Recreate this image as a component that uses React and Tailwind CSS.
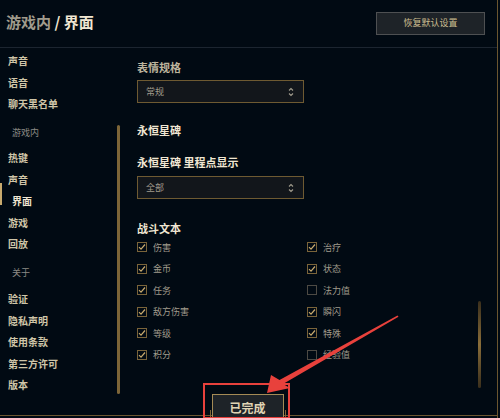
const LEFT_OPTS = [
  { label: '伤害', on: true },
  { label: '金币', on: true },
  { label: '任务', on: true },
  { label: '敌方伤害', on: true },
  { label: '等级', on: true },
  { label: '积分', on: true },
];

const RIGHT_OPTS = [
  { label: '治疗', on: true },
  { label: '状态', on: true },
  { label: '法力值', on: false },
  { label: '瞬闪', on: true },
  { label: '特殊', on: true },
  { label: '经验值', on: false },
];

const NAV = [
  { items: ['声音', '语音', '聊天黑名单'] },
  { title: '游戏内', items: ['热键', '声音', '界面', '游戏', '回放'] },
  { title: '关于', items: ['验证', '隐私声明', '使用条款', '第三方许可', '版本'] },
];

function UpDown() {
  return (
    <svg width="6" height="10" viewBox="0 0 6 10" fill="none" stroke="#a09b8c" strokeWidth="1.1">
      <path d="M1 3.5 L3 1.5 L5 3.5" />
      <path d="M1 6.5 L3 8.5 L5 6.5" />
    </svg>
  );
}

function Select({ value }) {
  return (
    <div className="flex h-[23px] w-[167px] items-center justify-between border border-[#6e5a32] bg-[#12161b] pl-[8px] pr-[9px]">
      <span className="text-[9px] text-[#a09b8c]">{value}</span>
      <UpDown />
    </div>
  );
}

function Check({ label, on }) {
  return (
    <div className="flex h-[21.5px] items-center gap-[6px]">
      <span className={`flex h-[10px] w-[10px] items-center justify-center border ${on ? 'border-[#7a643a]' : 'border-[#4d4a44]'}`}>
        {on && (
          <svg width="8" height="8" viewBox="0 0 8 8" fill="none" stroke="#c8aa6e" strokeWidth="1.2">
            <path d="M1 4.2 L3 6.2 L7 1.5" />
          </svg>
        )}
      </span>
      <span className="text-[9px] text-[#a09b8c]">{label}</span>
    </div>
  );
}

export default function App() {
  return (
    <div className="relative h-[418px] w-[500px] overflow-hidden bg-[#010a13] font-['Noto_Sans_CJK_SC',sans-serif]">
      <div className="flex h-[418px] w-[498px] flex-col border-r border-[#6b5630]">
        {/* header */}
        <div className="flex h-[48px] shrink-0 items-center justify-between border-b border-[#1c2530] pl-[6px] pr-[12px]">
          <div className="pb-[2px] text-[15px] font-bold">
            <span className="text-[#a09b8c]">游戏内</span>
            <span className="text-[#f0e6d2]"> / 界面</span>
          </div>
          <button className="mb-[1px] h-[23px] w-[109px] border border-[#4e5052] bg-[#1e2328] text-[9px] text-[#cdbe91]">
            恢复默认设置
          </button>
        </div>

        {/* body */}
        <div className="flex h-[345px] shrink-0">
          <div className="flex w-[137px] shrink-0">
            <div className="w-[117px] pt-[2px]">
              {NAV.map((group, gi) => (
                <div key={gi}>
                  {group.title && (
                    <div className={`flex h-[21.5px] items-center pl-[12px] text-[9px] text-[#8c8a85] ${gi === 1 ? 'mb-[3.5px] mt-[7.5px]' : 'mb-[4.5px] mt-[7.5px]'}`}>
                      {group.title}
                    </div>
                  )}
                  {group.items.map((item, i) => {
                    const active = gi === 1 && item === '界面';
                    return (
                      <div key={i} className={`relative flex h-[21.5px] items-center text-[10px] font-bold ${active ? 'pl-[12px] text-[#f0e6d2]' : 'pl-[8px] text-[#cfc5a8]'}`}>
                        {active && <span className="absolute left-0 top-[-7px] h-[22px] w-[2px] bg-[#c8aa6e]" />}
                        {item}
                      </div>
                    );
                  })}
                </div>
              ))}
            </div>
            <div className="mt-[77px] h-[269px] w-[3px] rounded-full bg-[#7d6538]" />
          </div>

          <div className="flex-1 pt-[12px]">
            <div className="flex h-[14px] items-center text-[11px] font-bold text-[#bdb59e]">表情规格</div>
            <div className="mt-[6px]"><Select value="常规" /></div>
            <div className="mt-[20px] flex h-[14px] items-center text-[11px] font-bold text-[#f0e6d2]">永恒星碑</div>
            <div className="mt-[18px] flex h-[14px] items-center text-[11px] font-bold text-[#f0e6d2]">永恒星碑 里程点显示</div>
            <div className="mt-[7px]"><Select value="全部" /></div>
            <div className="mt-[22px] flex h-[14px] items-center text-[11px] font-bold text-[#f0e6d2]">战斗文本</div>
            <div className="mt-[1.5px] flex">
              <div className="w-[170px]">
                {LEFT_OPTS.map((o) => <Check key={o.label} {...o} />)}
              </div>
              <div className="w-[150px]">
                {RIGHT_OPTS.map((o) => <Check key={o.label} {...o} />)}
              </div>
            </div>
          </div>

          <div className="mr-[16px] mt-[253px] h-[87px] w-[3px] rounded-full bg-gradient-to-b from-[#3a2f1c] via-[#8a6e3a] to-[#3a2f1c]" />
        </div>

        {/* footer */}
        <div className="relative z-10 flex flex-1 justify-center pr-[2px]">
          <button className="relative mt-[1px] h-[26px] w-[72px] border border-b-0 border-[#a48a55] bg-[#1e2328] text-[12px] font-bold text-[#e0d4b4]">
            已完成
            <span className="absolute bottom-[2px] left-[-3px] h-[8px] w-px bg-[#7d6538]" />
            <span className="absolute bottom-[2px] right-[-3px] h-[8px] w-px bg-[#7d6538]" />
          </button>
        </div>
      </div>

      {/* bottom gold rule */}
      <div className="absolute bottom-[2px] left-0 h-px w-[498px] bg-[#6b5630]" />

      {/* red annotation */}
      <div className="absolute left-[203px] top-[383px] z-20 h-[36px] w-[87px] border-2 border-[#e8413c]" />
      <svg className="absolute left-0 top-0 z-20" width="500" height="418" viewBox="0 0 500 418">
        <polygon
          points="267,393 271,375 279.5,380 397.5,315.5 398.5,316.8 283,384 290,388"
          fill="#e8413c"
        />
      </svg>
    </div>
  );
}
